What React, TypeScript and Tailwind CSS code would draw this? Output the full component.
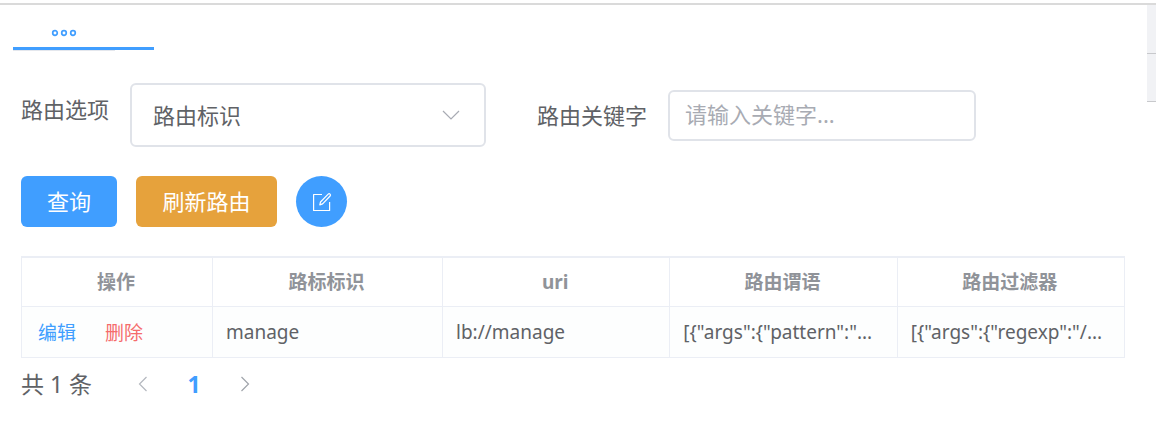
import { useState } from "react";

const columns = ["操作", "路标标识", "uri", "路由谓语", "路由过滤器"];

const rows = [
  {
    id: "manage",
    uri: "lb://manage",
    predicates: '[{"args":{"pattern":"...',
    filters: '[{"args":{"regexp":"/...',
  },
];

function EditIcon() {
  return (
    <svg viewBox="0 0 20 20" className="size-5" fill="none" stroke="currentColor" strokeWidth="1.2" strokeLinejoin="round">
      <path d="M10 2.500H1.600v16h16V10" />
      <path d="M16.200 2.200a1.300 1.300 0 0 1 1.900 1.800L10.600 11.900l-2.800 1 .7-2.900z" />
    </svg>
  );
}

function Chevron({ d }: { d: string }) {
  return (
    <svg viewBox="0 0 18 18" className="size-[18px]" fill="none" stroke="currentColor" strokeWidth="1.2">
      <path d={d} />
    </svg>
  );
}

export default function App() {
  const [keyword, setKeyword] = useState("");

  return (
    <div className="flex items-start bg-white pt-[3px] font-['Noto_Sans','Noto_Sans_CJK_SC',sans-serif] text-[#606266]">
      <div className="flex w-full items-start border-t-2 border-[#dadada]">
        <main className="min-w-0 flex-1">
          <nav className="pl-[13px]">
            <button
              type="button"
              aria-label="更多"
              className="block h-[45px] w-[141px] border-b-[3px] border-[#409eff] pl-[38px] text-[#409eff]"
            >
              <svg viewBox="0 0 26 8" className="mt-[14px] h-2 w-[26px]" fill="none" stroke="currentColor" strokeWidth="1.7">
                <circle cx="4" cy="4" r="2.3" />
                <circle cx="13" cy="4" r="2.3" />
                <circle cx="22" cy="4" r="2.3" />
              </svg>
            </button>
            <div className="h-px w-[102px] bg-[#e4e7ed]" />
          </nav>

          <div className="pl-[21px] pr-[22px] pt-8">
            <form className="text-[22px] leading-8" onSubmit={(e) => e.preventDefault()}>
              <div className="flex flex-wrap items-center gap-x-[51px] gap-y-4">
                <div className="flex items-start gap-[19px]">
                  <label htmlFor="option" className="w-[90px] whitespace-nowrap pt-[10px]">
                    路由选项
                  </label>
                  <div className="relative">
                    <select
                      id="option"
                      className="block h-16 w-[356px] appearance-none rounded-md border-2 border-[#e0e3e9] bg-white pl-[21px] pr-14"
                    >
                      <option>路由标识</option>
                    </select>
                    <span className="pointer-events-none absolute inset-y-0 right-[26px] flex items-center text-[#a8abb3]">
                      <Chevron d="M1 5l8 8 8-8" />
                    </span>
                  </div>
                </div>
                <div className="flex items-center gap-[19px]">
                  <label htmlFor="keyword" className="w-28 whitespace-nowrap">
                    路由关键字
                  </label>
                  <input
                    id="keyword"
                    value={keyword}
                    onChange={(e) => setKeyword(e.target.value)}
                    placeholder="请输入关键字..."
                    className="block h-[51px] w-[308px] rounded-md border-2 border-[#e0e3e9] px-[15px] pb-[2px] placeholder:text-[#a8abb3]"
                  />
                </div>
              </div>

              <div className="mt-[29px] flex items-center gap-[19px] text-white">
                <button type="submit" className="h-[51px] w-24 rounded-md bg-[#409eff] pb-[2px]">
                  查询
                </button>
                <button type="button" className="h-[51px] w-[141px] rounded-md bg-[#e6a23c] pb-[2px]">
                  刷新路由
                </button>
                <button
                  type="button"
                  aria-label="编辑"
                  className="flex size-[51px] items-center justify-center rounded-full bg-[#409eff]"
                >
                  <EditIcon />
                </button>
              </div>
            </form>

            <table className="mt-[29px] w-full table-fixed border-separate border-spacing-0 border-l border-t-2 border-[#ebeef5] text-[19px] leading-7">
              <colgroup>
                <col className="w-[191px]" />
                <col className="w-[230px]" />
                <col />
                <col />
                <col />
              </colgroup>
              <thead>
                <tr className="h-[49px]">
                  {columns.map((title) => (
                    <th key={title} className="border-b border-r border-[#ebeef5] py-0 pl-0 pr-[2px] font-bold text-[#909399]">
                      {title}
                    </th>
                  ))}
                </tr>
              </thead>
              <tbody>
                {rows.map((row) => (
                  <tr key={row.id} className="h-[51px] bg-[#fdfefe]">
                    <td className="border-b border-r border-[#ebeef5] pb-0 pl-4 pt-[2px]">
                      <div className="flex gap-[29px]">
                        <button type="button" className="text-[#409eff]">
                          编辑
                        </button>
                        <button type="button" className="text-[#f56c6c]">
                          删除
                        </button>
                      </div>
                    </td>
                    {[row.id, row.uri, row.predicates, row.filters].map((value) => (
                      <td key={value} className="truncate border-b border-r border-[#ebeef5] px-[13px] py-0">
                        {value}
                      </td>
                    ))}
                  </tr>
                ))}
              </tbody>
            </table>

            <div className="mt-[10px] flex items-center text-[23px] leading-8">
              <span className="w-[113px] whitespace-nowrap">共 1 条</span>
              <button type="button" aria-label="上一页" className="text-[#b4b8bf]">
                <Chevron d="M12.500 2L5.500 9l7 7" />
              </button>
              <button type="button" className="w-[84px] font-bold text-[#409eff]">
                1
              </button>
              <button type="button" aria-label="下一页" className="text-[#a0a4ab]">
                <Chevron d="M5.500 2l7 7-7 7" />
              </button>
            </div>
          </div>
        </main>

        <aside className="w-[9px] shrink-0 bg-[#f1f2f5]">
          <div className="h-[49px] border-b border-[#c8c9cc]" />
          <div className="h-12 border-b border-[#c8c9cc]" />
        </aside>
      </div>
    </div>
  );
}
